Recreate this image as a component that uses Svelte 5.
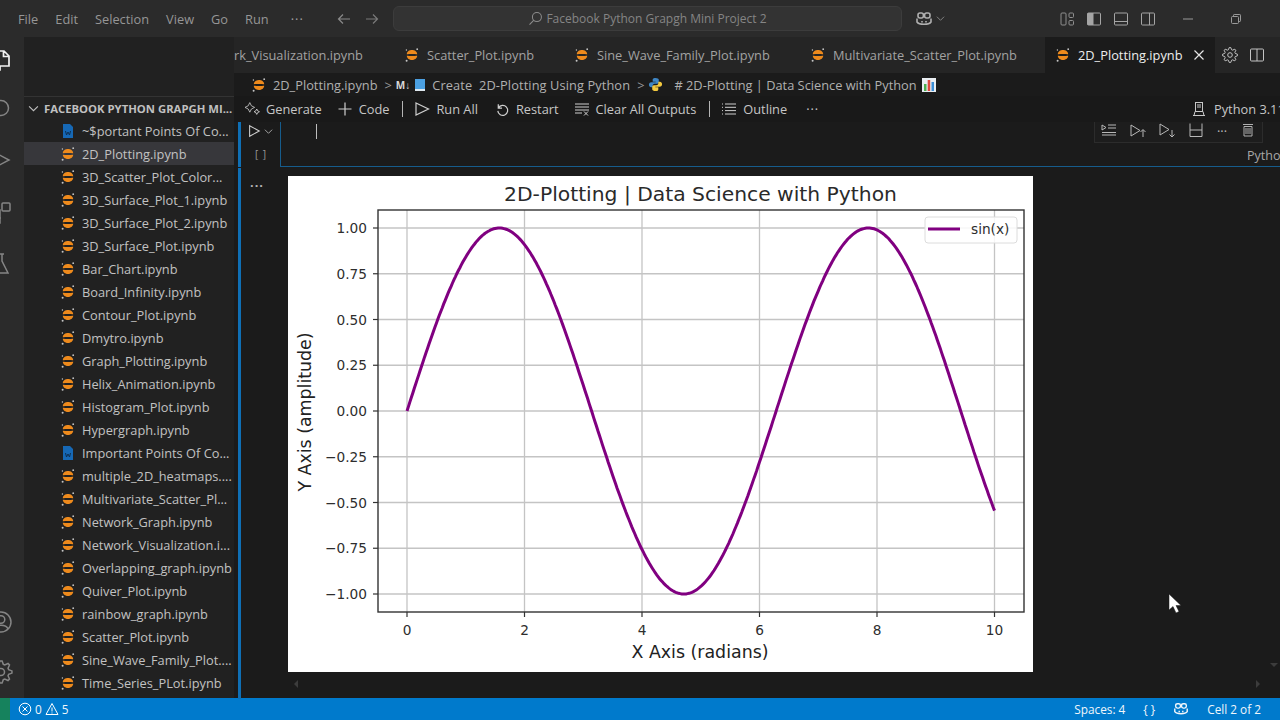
<script>
	const menus = ['File', 'Edit', 'Selection', 'View', 'Go', 'Run'];

	const files = [
		{ name: '~$portant Points Of Co...', kind: 'word' },
		{ name: '2D_Plotting.ipynb', active: true },
		{ name: '3D_Scatter_Plot_Color...' },
		{ name: '3D_Surface_Plot_1.ipynb' },
		{ name: '3D_Surface_Plot_2.ipynb' },
		{ name: '3D_Surface_Plot.ipynb' },
		{ name: 'Bar_Chart.ipynb' },
		{ name: 'Board_Infinity.ipynb' },
		{ name: 'Contour_Plot.ipynb' },
		{ name: 'Dmytro.ipynb' },
		{ name: 'Graph_Plotting.ipynb' },
		{ name: 'Helix_Animation.ipynb' },
		{ name: 'Histogram_Plot.ipynb' },
		{ name: 'Hypergraph.ipynb' },
		{ name: 'Important Points Of Co...', kind: 'word' },
		{ name: 'multiple_2D_heatmaps....' },
		{ name: 'Multivariate_Scatter_Pl...' },
		{ name: 'Network_Graph.ipynb' },
		{ name: 'Network_Visualization.i...' },
		{ name: 'Overlapping_graph.ipynb' },
		{ name: 'Quiver_Plot.ipynb' },
		{ name: 'rainbow_graph.ipynb' },
		{ name: 'Scatter_Plot.ipynb' },
		{ name: 'Sine_Wave_Family_Plot....' },
		{ name: 'Time_Series_PLot.ipynb' }
	];

	const tabs = [
		{ name: 'Scatter_Plot.ipynb', w: 170 },
		{ name: 'Sine_Wave_Family_Plot.ipynb', w: 236 },
		{ name: 'Multivariate_Scatter_Plot.ipynb', w: 243 }
	];

	// plot geometry, px inside the 745x496 figure
	const ax = { left: 90, right: 736, top: 34, bottom: 436 };
	const px = (x) => 119 + x * 58.75;
	const py = (y) => 235 - y * 183;

	const xTicks = [0, 2, 4, 6, 8, 10];
	const yTicks = [1, 0.75, 0.5, 0.25, 0, -0.25, -0.5, -0.75, -1];

	let curve = '';
	for (let i = 0; i <= 400; i++) {
		const x = i / 40;
		curve += (i ? 'L' : 'M') + px(x).toFixed(1) + ' ' + py(Math.sin(x)).toFixed(1);
	}

	const yLabel = (v) => (v < 0 ? '\u2212' : '') + Math.abs(v).toFixed(2);

	// toothed ring for the settings icons
	function gear(c, outer, inner, teeth = 8) {
		let d = '';
		for (let i = 0; i < teeth * 4; i++) {
			const r = i % 4 < 2 ? outer : inner;
			const a = ((i - 0.5) / (teeth * 4)) * Math.PI * 2;
			d += (i ? 'L' : 'M') + (c + r * Math.cos(a)).toFixed(2) + ' ' + (c + r * Math.sin(a)).toFixed(2);
		}
		return d + 'Z';
	}
</script>

{#snippet nb()}
	<svg class="nb" viewBox="0 0 16 16" width="16" height="16">
		<path d="M2.8 7.2C3 1.6 13 1.6 13.2 7.2C11 6.9 5 6.9 2.8 7.2Z" fill="#ee8a1c" />
		<path d="M2.8 8.8C3 14.4 13 14.400 13.2 8.8C11 9.1 5 9.1 2.8 8.8Z" fill="#ee8a1c" />
		<circle cx="13.2" cy="2.2" r="0.9" fill="#c4c4c4" />
		<circle cx="2.4" cy="3" r="0.7" fill="#c4c4c4" />
		<circle cx="2.6" cy="13.8" r="1" fill="#c4c4c4" />
	</svg>
{/snippet}

{#snippet copilot(size)}
	<svg viewBox="0 0 18 16" width={size} height={size} fill="none" stroke="currentColor" stroke-width="1.6">
		<path d="M2 7.5V11c2 3 12 3 14 0V7.5" />
		<rect x="3" y="2" width="5.4" height="5" rx="2" />
		<rect x="9.6" y="2" width="5.4" height="5" rx="2" />
		<path d="M7 10v1.6M11 10v1.6" />
	</svg>
{/snippet}

<div class="app">
	<header class="titlebar">
		<nav class="menus">
			{#each menus as m}<span>{m}</span>{/each}
			<span class="dots">···</span>
		</nav>
		<div class="arrows">
			<svg viewBox="0 0 16 16" width="16" height="16" fill="none" stroke="#8a8a8a" stroke-width="1.2"><path d="M14 8H2.5M7 3.5 2.5 8 7 12.5" /></svg>
			<svg viewBox="0 0 16 16" width="16" height="16" fill="none" stroke="#7a7a7a" stroke-width="1.2"><path d="M2 8h11.5M9 3.5 13.5 8 9 12.5" /></svg>
		</div>
		<div class="command">
			<svg viewBox="0 0 16 16" width="15" height="15" fill="none" stroke="#8c8c8c" stroke-width="1.1"><circle cx="9.5" cy="6.5" r="4.8" /><path d="M6 10 1.6 14.6" /></svg>
			<span>Facebook Python Grapgh Mini Project 2</span>
		</div>
		<div class="pilot">
			{@render copilot(18)}
			<svg viewBox="0 0 10 10" width="9" height="9" fill="none" stroke="#8a8a8a"><path d="M1 3l4 4 4-4" /></svg>
		</div>
		<div class="layouts">
			<svg viewBox="0 0 16 16" width="16" height="16" fill="none" stroke="#8f8f8f"><rect x="2" y="2" width="5" height="12" rx="1" /><rect x="10" y="2" width="4.5" height="4.5" rx="1" /><rect x="10" y="9.5" width="4.5" height="4.5" rx="1" /></svg>
			<svg viewBox="0 0 16 16" width="16" height="16" fill="none" stroke="#a5a5a5"><rect x="1.5" y="2" width="13" height="12" rx="1" /><rect x="2" y="2.5" width="5" height="11" fill="#a5a5a5" /></svg>
			<svg viewBox="0 0 16 16" width="16" height="16" fill="none" stroke="#a5a5a5"><rect x="1.5" y="2" width="13" height="12" rx="1" /><path d="M1.5 10.5h13" /></svg>
			<svg viewBox="0 0 16 16" width="16" height="16" fill="none" stroke="#a5a5a5"><rect x="1.5" y="2" width="13" height="12" rx="1" /><path d="M9.5 2v12" /></svg>
		</div>
		<div class="winctl">
			<svg viewBox="0 0 12 12" width="12" height="12" stroke="#9a9a9a"><path d="M1 6h10" /></svg>
			<svg viewBox="0 0 12 12" width="12" height="12" fill="none" stroke="#9a9a9a"><rect x="1.5" y="3.5" width="7" height="7" rx="1" /><path d="M3.5 3.5V2.2a.7.7 0 0 1 .7-.7h5.6a.7.7 0 0 1 .7.7v5.6a.7.7 0 0 1-.7.7H8.5" /></svg>
		</div>
	</header>

	<div class="main">
		<aside class="activity">
			<div class="act top">
				<svg class="files" viewBox="0 0 24 24" width="24" height="24" fill="none" stroke="#f2f2f2" stroke-width="1.7"><path d="M7 3h9l5 5v10H7zM15.5 3v5.5H21M7 18H3v4h9v-4" /></svg>
				<svg viewBox="0 0 24 24" width="24" height="24" fill="none" stroke="#858585" stroke-width="1.5"><circle cx="12" cy="12" r="7.5" /><path d="M6.500 17.500 1 23" /></svg>
				<svg viewBox="0 0 24 24" width="24" height="24" fill="none" stroke="#858585" stroke-width="1.5"><path d="M3 3l17 9-17 9z" /></svg>
				<svg viewBox="0 0 24 24" width="24" height="24" fill="none" stroke="#858585" stroke-width="1.5"><rect x="3" y="10" width="8" height="8" /><rect x="13" y="3" width="8" height="8" rx="1" /><rect x="3" y="18" width="8" height="5" /></svg>
				<svg viewBox="0 0 24 24" width="24" height="24" fill="none" stroke="#858585" stroke-width="1.5"><path d="M8 2h7M10 2v7L4 21h15L13 9V2" /></svg>
			</div>
			<div class="act bottom">
				<svg viewBox="0 0 24 24" width="24" height="24" fill="none" stroke="#858585" stroke-width="1.5"><circle cx="12" cy="12" r="10" /><circle cx="12" cy="9.5" r="3.8" /><path d="M5 19c2-5 12-5 14 0" /></svg>
				<svg viewBox="0 0 24 24" width="24" height="24" fill="none" stroke="#858585" stroke-width="1.5"><circle cx="12" cy="12" r="3.5" /><path d={gear(12, 11, 8)} /></svg>
			</div>
		</aside>

		<aside class="sidebar">
			<div class="section">
				<svg viewBox="0 0 10 10" width="11" height="11" fill="none" stroke="#c0c0c0"><path d="M1 3l4 4 4-4" /></svg>
				<span>FACEBOOK PYTHON GRAPGH MI...</span>
			</div>
			<ul>
				{#each files as f}
					<li class:active={f.active}>
						{#if f.kind === 'word'}
							<svg class="nb" viewBox="0 0 16 16" width="16" height="16"><path d="M3 1h7l3 3v11H3z" fill="#1668b5" /><path d="M5.5 8l1 4 1.5-3 1.5 3 1-4" fill="none" stroke="#0d2f52" /></svg>
						{:else}
							{@render nb()}
						{/if}
						<span>{f.name}</span>
					</li>
				{/each}
			</ul>
		</aside>

		<section class="editor">
			<div class="tabs">
				<div class="tab clipped"><span>rk_Visualization.ipynb</span></div>
				{#each tabs as t}
					<div class="tab" style="width: {t.w}px">{@render nb()}<span>{t.name}</span></div>
				{/each}
				<div class="tab current">
					{@render nb()}<span>2D_Plotting.ipynb</span>
					<svg viewBox="0 0 12 12" width="12" height="12" stroke="#e6e6e6" stroke-width="1.2"><path d="M1.5 1.5l9 9M10.5 1.5l-9 9" /></svg>
				</div>
				<div class="tabacts">
					<svg viewBox="0 0 16 16" width="16" height="16" fill="none" stroke="#c4c4c4"><circle cx="8" cy="8" r="2.3" /><path d={gear(8, 7.5, 5.5)} /></svg>
					<svg viewBox="0 0 16 16" width="16" height="16" fill="none" stroke="#c4c4c4"><rect x="1.5" y="2" width="13" height="12" rx="1" /><path d="M8 2v12" /></svg>
				</div>
			</div>

			<div class="crumbs">
				{@render nb()}
				<span class="c-file">2D_Plotting.ipynb</span>
				<span class="sep">&gt;</span>
				<b class="md">M↓</b>
				<svg class="book" viewBox="0 0 10 12" width="10" height="12"><rect width="10" height="12" fill="#4b9fe0" /><rect y="10" width="10" height="2" fill="#dfe8ef" /></svg>
				<span class="c-create">Create&nbsp; 2D-Plotting Using Python</span>
				<span class="sep">&gt;</span>
				<svg class="py" viewBox="0 0 16 16" width="15" height="15">
					<path d="M8 1C5 1 5 2.2 5 3.500V5h3.200v.6H3.500C2 5.600 1 6.600 1 8.300c0 1.700 1 2.700 2.300 2.700H5V9.300C5 8 6 7.200 7.200 7.200h2.600c1 0 1.700-.8 1.700-1.800V3C11.500 1.800 10 1 8 1z" fill="#3f86c4" />
					<path d="M8 15c3 0 3-1.200 3-2.500V11H7.800v-.6h4.700c1.500 0 2.500-1 2.500-2.700 0-1.700-1-2.700-2.300-2.700H11v1.700C11 8 10 8.800 8.800 8.800H6.200c-1 0-1.700.8-1.700 1.800V13c0 1.200 1.500 2 3.500 2z" fill="#f3c93f" />
				</svg>
				<span class="c-head"># 2D-Plotting | Data Science with Python</span>
				<svg class="emoji" viewBox="0 0 14 14" width="14" height="14"><rect width="14" height="14" fill="#e9eef2" /><rect x="2" y="6" width="2.5" height="7" fill="#4caf50" /><rect x="5.7" y="2" width="2.5" height="11" fill="#e0483e" /><rect x="9.5" y="4" width="2.5" height="9" fill="#3b8ed6" /></svg>
			</div>

			<div class="toolbar">
				<span class="tool gen">
					<svg viewBox="0 0 16 16" width="16" height="16" fill="none" stroke="#cfcfcf"><path d="M6 2l2 4 4 2-4 2-2 4-2-4-4-2 4-2z" transform="translate(1 0) scale(.8)" /><path d="M12.5 10l1 2 2 1-2 1-1 2-1-2-2-1 2-1z" transform="translate(1.5 -1) scale(.9)" /></svg>
					Generate
				</span>
				<span class="tool code">
					<svg viewBox="0 0 16 16" width="16" height="16" stroke="#cfcfcf" stroke-width="1.2"><path d="M8 1.5v13M1.5 8h13" /></svg>
					Code
				</span>
				<i class="bar"></i>
				<span class="tool run">
					<svg viewBox="0 0 16 16" width="16" height="16" fill="none" stroke="#cfcfcf" stroke-width="1.2"><path d="M2 2 14.5 8 2 14z" /></svg>
					Run All
				</span>
				<span class="tool restart">
					<svg viewBox="0 0 16 16" width="15" height="15" fill="none" stroke="#cfcfcf" stroke-width="1.3"><path d="M3.5 2.5v4h4M3.7 6.300A5.300 5.300 0 1 1 3 9.500" /></svg>
					Restart
				</span>
				<span class="tool clear">
					<svg viewBox="0 0 16 16" width="16" height="16" fill="none" stroke="#cfcfcf"><path d="M1 3h14M1 6h14M1 9h14M1 12h7M10 10.5l4 4M14 10.5l-4 4" /></svg>
					Clear All Outputs
				</span>
				<i class="bar"></i>
				<span class="tool outline">
					<svg viewBox="0 0 16 16" width="16" height="16" fill="none" stroke="#cfcfcf"><path d="M4 3h11M4 6.300h11M4 9.600h11M4 13h11M1 3h1M1 6.300h1M1 9.600h1M1 13h1" /></svg>
					Outline
				</span>
				<span class="tool more">···</span>
				<span class="kernel">
					<svg viewBox="0 0 16 16" width="16" height="16" fill="none" stroke="#c8c8c8"><rect x="4.5" y="1.5" width="7" height="9" /><path d="M2 14.5h12M3 14.5l1-4h8l1 4M6 4h4M6 6h4" /></svg>
					Python 3.11
				</span>
			</div>

			<div class="notebook">
				<div class="cell">
					<div class="gutter">
						<div class="runline">
							<svg viewBox="0 0 16 16" width="14" height="14" fill="none" stroke="#d0d0d0" stroke-width="1.2"><path d="M3 2l11 6-11 6z" /></svg>
							<svg viewBox="0 0 10 10" width="9" height="9" fill="none" stroke="#b0b0b0"><path d="M1 3l4 4 4-4" /></svg>
						</div>
						<div class="brackets">[ ]</div>
					</div>
					<div class="input">
						<i class="caret"></i>
						<span class="lang">Python</span>
					</div>
					<div class="celltools">
						<svg viewBox="0 0 16 16" width="16" height="16" fill="none" stroke="#b8b8b8"><path d="M1 3l4 2.5L1 8zM7 3h8M7 6h8M1 10.5h14M1 13h14" /></svg>
						<svg viewBox="0 0 16 16" width="16" height="16" fill="none" stroke="#b8b8b8"><path d="M1 3l9 5.5L1 14zM13 15V8M10.5 10 13 7.5l2.500 2.500" /></svg>
						<svg viewBox="0 0 16 16" width="16" height="16" fill="none" stroke="#b8b8b8"><path d="M1 2l9 5.5L1 13zM13 8v7M10.5 12.500 13 15l2.500-2.500" /></svg>
						<svg viewBox="0 0 16 16" width="16" height="16" fill="none" stroke="#b8b8b8"><path d="M2 1.5v13M14 1.5v13M2 8h12M2 14.5h12" /></svg>
						<span>···</span>
						<svg viewBox="0 0 16 16" width="16" height="16" fill="none" stroke="#b0b0b0"><path d="M3 2.5h10M4 4.5h8v9.500H4zM6 6v6M8 6v6M10 6v6" /></svg>
					</div>
				</div>

				<div class="output">
					<div class="outbar"></div>
					<div class="outdots">···</div>
					<svg class="figure" viewBox="0 0 745 496" width="745" height="496">
						<rect width="745" height="496" fill="#fff" />
						<text x="412.5" y="25" text-anchor="middle" class="title">2D-Plotting | Data Science with Python</text>
						{#each xTicks as t}
							<line x1={px(t)} x2={px(t)} y1={ax.top} y2={ax.bottom} class="grid" />
							<line x1={px(t)} x2={px(t)} y1={ax.bottom} y2={ax.bottom + 5} class="tick" />
							<text x={px(t)} y={ax.bottom + 23} text-anchor="middle" class="lab">{t}</text>
						{/each}
						{#each yTicks as t}
							<line x1={ax.left} x2={ax.right} y1={py(t)} y2={py(t)} class="grid" />
							<line x1={ax.left - 5} x2={ax.left} y1={py(t)} y2={py(t)} class="tick" />
							<text x={ax.left - 11} y={py(t) + 5} text-anchor="end" class="lab">{yLabel(t)}</text>
						{/each}
						<path d={curve} fill="none" stroke="#800080" stroke-width="3" />
						<rect x={ax.left} y={ax.top} width={ax.right - ax.left} height={ax.bottom - ax.top} fill="none" stroke="#333" stroke-width="1.4" />
						<rect x="637" y="41" width="92" height="26" rx="3" fill="#fff" fill-opacity=".85" stroke="#dcdcdc" />
						<line x1="640" x2="672" y1="53" y2="53" stroke="#800080" stroke-width="3" />
						<text x="683" y="58" class="lab">sin(x)</text>
						<text x="412" y="482" text-anchor="middle" class="axis">X Axis (radians)</text>
						<text transform="translate(23 236) rotate(-90)" text-anchor="middle" class="axis">Y Axis (amplitude)</text>
					</svg>
				</div>

				<div class="scrollarrows">
					<span></span>
					<span></span>
				</div>
				<i class="down"></i>
			</div>
		</section>
	</div>

	<footer class="status">
		<div class="remote"></div>
		<span class="problems">
			<svg viewBox="0 0 14 14" width="14" height="14" fill="none" stroke="#fff"><circle cx="7" cy="7" r="5.8" /><path d="M4.5 4.5l5 5M9.500 4.500l-5 5" /></svg>
			0
			<svg viewBox="0 0 14 14" width="14" height="14" fill="none" stroke="#fff"><path d="M7 1.500 13 12.500H1zM7 5.500v4M7 10.500v1" /></svg>
			5
		</span>
		<span class="right">
			<span>Spaces: 4</span>
			<span>{'{ }'}</span>
			{@render copilot(16)}
			<span>Cell 2 of 2</span>
		</span>
	</footer>

	<svg class="pointer" viewBox="0 0 14 20" width="14" height="20">
		<path d="M1 0v16l4-3.5 3 6.5 3-1.500-3-6h5z" fill="#fff" stroke="#1a1a1a" stroke-width=".5" />
	</svg>
</div>

<style>
	:global(body) {
		margin: 0;
		background: #1b1b1b;
	}

	.app {
		position: relative;
		display: flex;
		flex-direction: column;
		width: 1280px;
		height: 720px;
		overflow: hidden;
		background: #1b1b1b;
		color: #c4c4c4;
		font-family: "Open Sans", "Noto Sans", sans-serif;
		font-size: 12.8px;
	}

	svg {
		flex: none;
		display: block;
	}

	.titlebar {
		display: flex;
		align-items: center;
		height: 37px;
		flex: none;
		background: #2b2b2b;
		color: #969696;
	}
	.menus {
		display: flex;
		gap: 17px;
		margin-left: 18px;
		width: 318px;
	}
	.dots {
		color: #a0a0a0;
		letter-spacing: 1px;
		margin-left: 5px;
	}
	.arrows {
		display: flex;
		gap: 12px;
		width: 57px;
	}
	.command {
		display: flex;
		align-items: center;
		justify-content: center;
		gap: 3px;
		box-sizing: border-box;
		width: 509px;
		height: 25px;
		background: #333333;
		border: 1px solid #3c3c3c;
		border-radius: 6px;
		color: #858585;
		font-size: 12px;
	}
	.pilot {
		display: flex;
		align-items: center;
		gap: 3px;
		margin-left: 13px;
		width: 144px;
		color: #b0b0b0;
	}
	.layouts {
		display: flex;
		gap: 11px;
		width: 123px;
	}
	.winctl {
		display: flex;
		gap: 36px;
	}

	.main {
		display: flex;
		flex: 1;
		min-height: 0;
	}

	.activity {
		display: flex;
		flex-direction: column;
		justify-content: space-between;
		width: 24px;
		flex: none;
		overflow: hidden;
		background: #2b2b2b;
		padding: 11px 0 14px;
		box-sizing: border-box;
	}
	.act {
		display: flex;
		flex-direction: column;
		gap: 28px;
		margin-left: -11px;
	}
	.files {
		margin-bottom: -4px;
		margin-left: -1px;
	}
	.bottom {
		gap: 26px;
	}

	.sidebar {
		width: 210px;
		flex: none;
		background: #212121;
		padding-top: 59px;
		box-sizing: border-box;
		overflow: hidden;
	}
	.section {
		display: flex;
		align-items: center;
		gap: 5px;
		height: 23px;
		padding-left: 4px;
		color: #c0c0c0;
		font-size: 11.3px;
		font-weight: 700;
		white-space: nowrap;
		border-top: 1px solid #333;
		box-sizing: border-box;
	}
	ul {
		list-style: none;
		margin: 0;
		padding: 0;
	}
	li {
		display: flex;
		align-items: center;
		gap: 6px;
		height: 23px;
		padding-left: 36px;
		color: #c2c2c2;
		white-space: nowrap;
	}
	li.active {
		background: #37373b;
	}

	.editor {
		position: relative;
		display: flex;
		flex-direction: column;
		flex: 1;
		min-width: 0;
	}

	.tabs {
		display: flex;
		align-items: stretch;
		height: 36px;
		flex: none;
		background: #252525;
		color: #a2a2a2;
		white-space: nowrap;
		overflow: hidden;
	}
	.tab {
		display: flex;
		align-items: center;
		gap: 7px;
		padding-left: 8px;
		box-sizing: border-box;
		flex: none;
	}
	.clipped {
		width: 162px;
		padding-left: 0;
		overflow: hidden;
		justify-content: flex-start;
	}
	.current {
		width: 170px;
		padding-left: 10px;
		background: #1b1b1b;
		color: #ededed;
	}
	.current svg:last-child {
		margin-left: 3px;
	}
	.tabacts {
		display: flex;
		align-items: center;
		gap: 11px;
		margin-left: 7px;
	}

	.crumbs {
		display: flex;
		align-items: center;
		height: 23px;
		flex: none;
		padding-left: 17px;
		color: #b0b0b0;
		white-space: nowrap;
	}
	.c-file {
		margin-left: 6px;
	}
	.sep {
		margin: 0 4px 0 7px;
		color: #999;
	}
	.md {
		font-size: 10px;
		color: #d8d8d8;
	}
	.book {
		margin: 0 5px 0 5px;
	}
	.c-create {
		margin-left: 2px;
		letter-spacing: 0.1px;
	}
	.py {
		margin: 0 11px 0 0;
	}
	.emoji {
		margin-left: 5px;
	}

	.toolbar {
		position: relative;
		display: flex;
		align-items: center;
		height: 26px;
		flex: none;
		padding-left: 10px;
		background: #191919;
		color: #c6c6c6;
		white-space: nowrap;
	}
	.tool {
		display: flex;
		align-items: center;
		gap: 6px;
	}
	.code {
		margin-left: 15px;
	}
	.bar {
		width: 1px;
		height: 16px;
		margin: 0 11px 0 13px;
		background: #b5b5b5;
	}
	.restart {
		margin-left: 17px;
	}
	.clear {
		margin-left: 15px;
	}
	.more {
		margin-left: 19px;
		letter-spacing: 1px;
	}
	.kernel {
		position: absolute;
		left: 957px;
		display: flex;
		align-items: center;
		gap: 7px;
	}

	.notebook {
		position: relative;
		flex: 1;
		min-height: 0;
	}

	.cell {
		position: relative;
		display: flex;
		height: 45px;
		margin-left: 4px;
	}
	.cell::before {
		content: "";
		width: 3px;
		background: #0f6fb5;
		flex: none;
	}
	.gutter {
		width: 39px;
		flex: none;
		padding-top: 2px;
		box-sizing: border-box;
	}
	.runline {
		display: flex;
		align-items: center;
		gap: 3px;
		padding-left: 6px;
	}
	.brackets {
		margin-top: 9px;
		padding-left: 14px;
		font-size: 10px;
		color: #9a9a9a;
		letter-spacing: 1px;
	}
	.input {
		position: relative;
		flex: 1;
		border-left: 1px solid #165c8c;
		border-bottom: 1px solid #165c8c;
	}
	.caret {
		display: block;
		width: 1px;
		height: 15px;
		margin: 2px 0 0 35px;
		background: #bdbdbd;
	}
	.lang {
		position: absolute;
		left: 966px;
		top: 25px;
		font-size: 12.5px;
		color: #a8a8a8;
	}
	.celltools {
		position: absolute;
		right: 17px;
		top: 0;
		display: flex;
		align-items: flex-start;
		gap: 13px;
		height: 20px;
		padding: 0 6px;
		background: #1d1d1d;
		border: 1px solid #2c2c2c;
		border-top: 0;
		color: #b8b8b8;
	}

	.output {
		position: relative;
		display: flex;
		margin-top: 9px;
		height: 496px;
	}
	.outbar {
		position: absolute;
		left: 4px;
		top: -8px;
		width: 3px;
		height: 531px;
		background: #0f6fb5;
	}
	.outdots {
		position: absolute;
		left: 16px;
		top: 0;
		letter-spacing: 1px;
		font-weight: 700;
		color: #b5b5b5;
	}
	.figure {
		margin-left: 54px;
		font-family: "DejaVu Sans", sans-serif;
	}
	.title {
		font-size: 20.3px;
		fill: #2a2a2a;
	}
	.lab {
		font-size: 13.7px;
		fill: #2e2e2e;
	}
	.axis {
		font-size: 17.4px;
		fill: #222;
	}
	.grid {
		stroke: #c4c4c4;
		stroke-width: 1.3;
	}
	.tick {
		stroke: #333;
		stroke-width: 1.2;
	}

	.scrollarrows {
		display: flex;
		justify-content: space-between;
		margin: 8px 20px 0 60px;
	}
	.scrollarrows span {
		border: 4px solid transparent;
		border-left: 0;
		border-right: 4px solid #3c3c3c;
	}
	.scrollarrows span:last-child {
		border-right: 0;
		border-left: 4px solid #3c3c3c;
	}
	.down {
		position: absolute;
		right: 2px;
		top: 541px;
		border: 4px solid transparent;
		border-bottom: 0;
		border-top: 4px solid #3c3c3c;
	}

	.status {
		display: flex;
		align-items: center;
		height: 22px;
		flex: none;
		background: #007acc;
		color: #f0f6fb;
		font-size: 11.8px;
	}
	.remote {
		width: 10px;
		align-self: stretch;
		background: #16825d;
	}
	.problems {
		display: flex;
		align-items: center;
		gap: 3px;
		margin-left: 8px;
	}
	.right {
		display: flex;
		align-items: center;
		gap: 18px;
		margin-left: auto;
		margin-right: 19px;
	}

	.pointer {
		position: absolute;
		left: 1168px;
		top: 594px;
	}
</style>
